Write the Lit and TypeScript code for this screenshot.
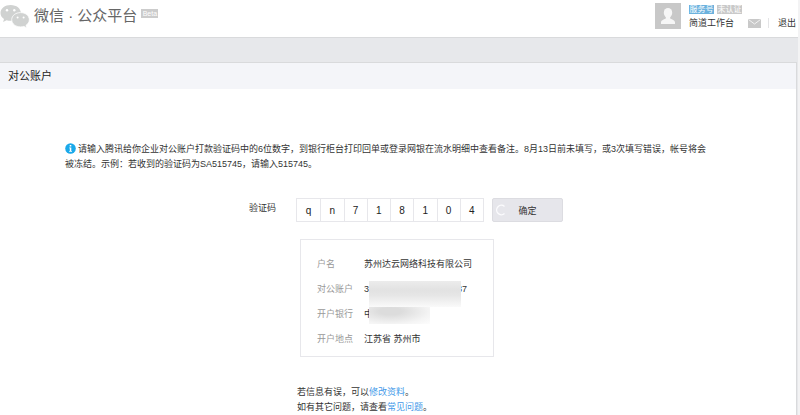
import { LitElement, html, css } from "lit";
import { customElement, property } from "lit/decorators.js";

@customElement("site-header")
class SiteHeader extends LitElement {
  static styles = css`
    :host { display: block; }
    header {
      display: flex;
      align-items: flex-start;
      justify-content: space-between;
      min-height: 38px;
      box-sizing: border-box;
      background: #fff;
      border-bottom: 1px solid #d9dadc;
    }
    .brand { display: flex; align-items: flex-start; }
    .logo { width: 30px; height: 24px; margin-top: 4px; display: block; }
    h1 {
      margin: 5px 0 0 4px;
      font-size: 15px;
      line-height: 22px;
      font-weight: 400;
      color: #666;
      white-space: pre;
    }
    .beta {
      margin: 9px 0 0 4px;
      width: 17px;
      background: #ccc;
      color: #fff;
      font-size: 7px;
      line-height: 9px;
      text-align: center;
    }
    .account { display: flex; align-items: flex-start; padding-right: 2px; }
    .avatar { width: 26px; height: 26px; margin-top: 3px; display: block; }
    .who { margin: 5px 0 0 8px; }
    .tags { display: flex; gap: 3px; }
    .tag {
      width: 25px;
      background: #c9c9c9;
      color: #fff;
      font-size: 8px;
      line-height: 9px;
      text-align: center;
      white-space: nowrap;
    }
    .tag.service { background: #6cb2de; }
    .name { font-size: 9px; line-height: 14px; margin-top: 2px; }
    .mail { display: block; width: 13px; height: 9px; }
    .mail-link { margin: 19px 0 0 6px; }
    .line { width: 1px; height: 10px; margin: 18px 9px 0 7px; background: #e4e4e6; }
    .exit {
      margin-top: 16px;
      font-size: 9px;
      line-height: 14px;
      color: #333;
      text-decoration: none;
    }
  `;

  render() {
    return html`
      <header>
        <div class="brand">
          <svg class="logo" viewBox="0 0 30 24" aria-hidden="true">
            <path fill="#d0d2d1" d="M10.700 1C4.900 1 .5 4.500.5 9c0 2.500 1.300 4.600 3.500 6l-.9 3 3.500-1.800c1.300.4 2.700.6 4.100.6 5.800 0 10.200-3.400 10.200-7.800S16.500 1 10.700 1z"/>
            <path fill="#d0d2d1" stroke="#fff" stroke-width=".8" d="M20.600 8.600c-5 0-8.900 3-8.900 7.100s3.900 7.200 8.900 7.200c1.200 0 2.300-.2 3.300-.5l2.900 1.500-.8-2.600c2.100-1.300 3.300-3.300 3.300-5.500 0-4.100-3.800-7.200-8.700-7.200z"/>
            <g fill="#fff">
              <circle cx="7" cy="6.300" r="1.200"/><circle cx="14.300" cy="6.300" r="1.200"/>
              <circle cx="17.600" cy="13.500" r="1"/><circle cx="23.600" cy="13.500" r="1"/>
            </g>
          </svg>
          <h1>微信 · 公众平台</h1>
          <span class="beta">Beta</span>
        </div>
        <div class="account">
          <svg class="avatar" viewBox="0 0 26 26" aria-hidden="true">
            <rect width="26" height="26" fill="#c8c8c8"/>
            <ellipse cx="13" cy="9.800" rx="4.200" ry="4.900" fill="#f6f6f6"/>
            <path fill="#f6f6f6" d="M10.800 12.500h4.400v2.700c.5 1.200 4.800 1.200 4.800 4.300V21H6v-1.500c0-3.100 4.300-3.100 4.800-4.300z"/>
          </svg>
          <div class="who">
            <div class="tags"><span class="tag service">服务号</span><span class="tag">未认证</span></div>
            <div class="name">简道工作台</div>
          </div>
          <a class="mail-link" href="#messages" aria-label="消息">
            <svg class="mail" viewBox="0 0 13 9"><rect width="13" height="9" fill="#c9c9c9"/><path d="M.5.500 6.500 5l6-4.500" fill="none" stroke="#f2f2f2"/></svg>
          </a>
          <span class="line"></span>
          <a class="exit" href="#logout">退出</a>
        </div>
      </header>
    `;
  }
}

@customElement("code-form")
class CodeForm extends LitElement {
  @property() code = "";

  static styles = css`
    :host { display: block; }
    form { display: flex; align-items: flex-start; }
    .label { width: 47px; font-size: 9px; line-height: 20px; }
    .cells {
      display: grid;
      grid-template-columns: repeat(8, 1fr);
      width: 188px;
      height: 24px;
      box-sizing: border-box;
      border: 1px solid #e7e7eb;
    }
    input {
      min-width: 0;
      box-sizing: border-box;
      margin: 0;
      padding: 0;
      border: 0;
      border-left: 1px solid #e7e7eb;
      background: #fff;
      color: #222;
      font: inherit;
      font-size: 10px;
      text-align: center;
      outline: none;
    }
    input:first-child { border-left: 0; }
    button {
      display: grid;
      grid-template-columns: 16px 1fr 16px;
      align-items: center;
      width: 71px;
      height: 24px;
      margin: 0 0 0 8px;
      padding: 0 2px;
      border: 1px solid #dcdce1;
      border-radius: 2px;
      background: #e6e6eb;
      color: #333;
      font: inherit;
      font-size: 9px;
    }
    .spinner { width: 12px; height: 12px; display: block; }
  `;

  render() {
    return html`
      <form @submit=${(e: Event) => e.preventDefault()}>
        <label class="label" for="c0">验证码</label>
        <div class="cells">
          ${[...this.code].map(
            (ch, i) => html`<input id="c${i}" maxlength="1" aria-label="验证码 ${i + 1}" .value=${ch} />`
          )}
        </div>
        <button type="submit">
          <svg class="spinner" viewBox="0 0 12 12" aria-hidden="true">
            <path d="M9.500 2.500A4.700 4.700 0 1 0 9.500 9.500" fill="none" stroke="#fbfbfd" stroke-width="1.400"/>
          </svg>
          <span>确定</span>
        </button>
      </form>
    `;
  }
}

@customElement("account-card")
class AccountCard extends LitElement {
  static styles = css`
    :host { display: block; }
    dl {
      position: relative;
      display: grid;
      grid-template-columns: 47px 1fr;
      width: 194px;
      box-sizing: border-box;
      margin: 0;
      padding: 12px 10px 4px 16px;
      border: 1px solid #e7e7eb;
      font-size: 9px;
      line-height: 25px;
    }
    dt { color: #999; }
    dd { margin: 0; white-space: pre; }
    .number { display: flex; gap: 88px; }
    .mask {
      position: absolute;
      left: 68px;
      top: 41px;
      width: 92px;
      height: 26px;
      background: linear-gradient(#ececec, #e2e2e2 35%, #e6e6e6 55%, #fafafa);
    }
    .mask.bank {
      top: 67px;
      width: 61px;
      height: 17px;
      background: radial-gradient(ellipse at 35% 25%, #dcdcdc 20%, #f4f4f4 70%, #fdfdfd);
    }
  `;

  render() {
    return html`
      <dl>
        <dt>户名</dt><dd>苏州达云网络科技有限公司</dd>
        <dt>对公账户</dt><dd class="number"><span>3</span><span>37</span></dd>
        <dt>开户银行</dt><dd>中</dd>
        <dt>开户地点</dt><dd>江苏省 苏州市</dd>
        <div class="mask"></div>
        <div class="mask bank"></div>
      </dl>
    `;
  }
}

@customElement("app-root")
class AppRoot extends LitElement {
  static styles = css`
    :host {
      display: block;
      min-height: 100vh;
      box-sizing: border-box;
      border-right: 2px solid #f3f3f4;
      background: #e7e8eb;
      color: #333;
      font-family: "Liberation Sans", "Noto Sans CJK SC", sans-serif;
    }
    .page { display: flex; flex-direction: column; min-height: 100vh; }
    main {
      flex: 1;
      margin: 24px 1px 0 0;
      background: #fff;
      border: 1px solid #d9dadc;
      border-width: 1px 1px 0 0;
    }
    h2 {
      margin: 0;
      padding: 0 8px;
      background: #f4f5f9;
      font-size: 11px;
      line-height: 26px;
      font-weight: 400;
      color: #222;
    }
    .notice {
      margin: 53px 85px 0 65px;
      font-size: 9px;
      line-height: 15px;
    }
    .info { width: 11px; height: 11px; margin-right: 2px; vertical-align: -2px; }
    code-form { margin: 26px 0 0 249px; }
    account-card { margin: 17px 0 0 300px; }
    .help { margin: 28px 0 0 297px; font-size: 9px; line-height: 15px; }
    .help p { margin: 0; }
    .help a { color: #459ae9; text-decoration: none; }
  `;

  render() {
    return html`
      <div class="page">
        <site-header></site-header>
        <main>
          <h2>对公账户</h2>
          <div class="notice">
            <svg class="info" viewBox="0 0 11 11" aria-hidden="true">
              <circle cx="5.500" cy="5.500" r="5.300" fill="#1aa9ea"/>
              <path fill="#fff" d="M4.700 2h1.600v1.400H4.700zM4.200 4.400h2.100v3.500h.7v.9H4.100v-.9h.7V5.300h-.6z"/>
            </svg>请输入腾讯给你企业对公账户打款验证码中的6位数字，到银行柜台打印回单或登录网银在流水明细中查看备注。8月13日前未填写，或3次填写错误，帐号将会被冻结。示例：若收到的验证码为SA515745，请输入515745。
          </div>
          <code-form code="qn718104"></code-form>
          <account-card></account-card>
          <div class="help">
            <p>若信息有误，可以<a href="#edit">修改资料</a>。</p>
            <p>如有其它问题，请查看<a href="#faq">常见问题</a>。</p>
          </div>
        </main>
      </div>
    `;
  }
}
